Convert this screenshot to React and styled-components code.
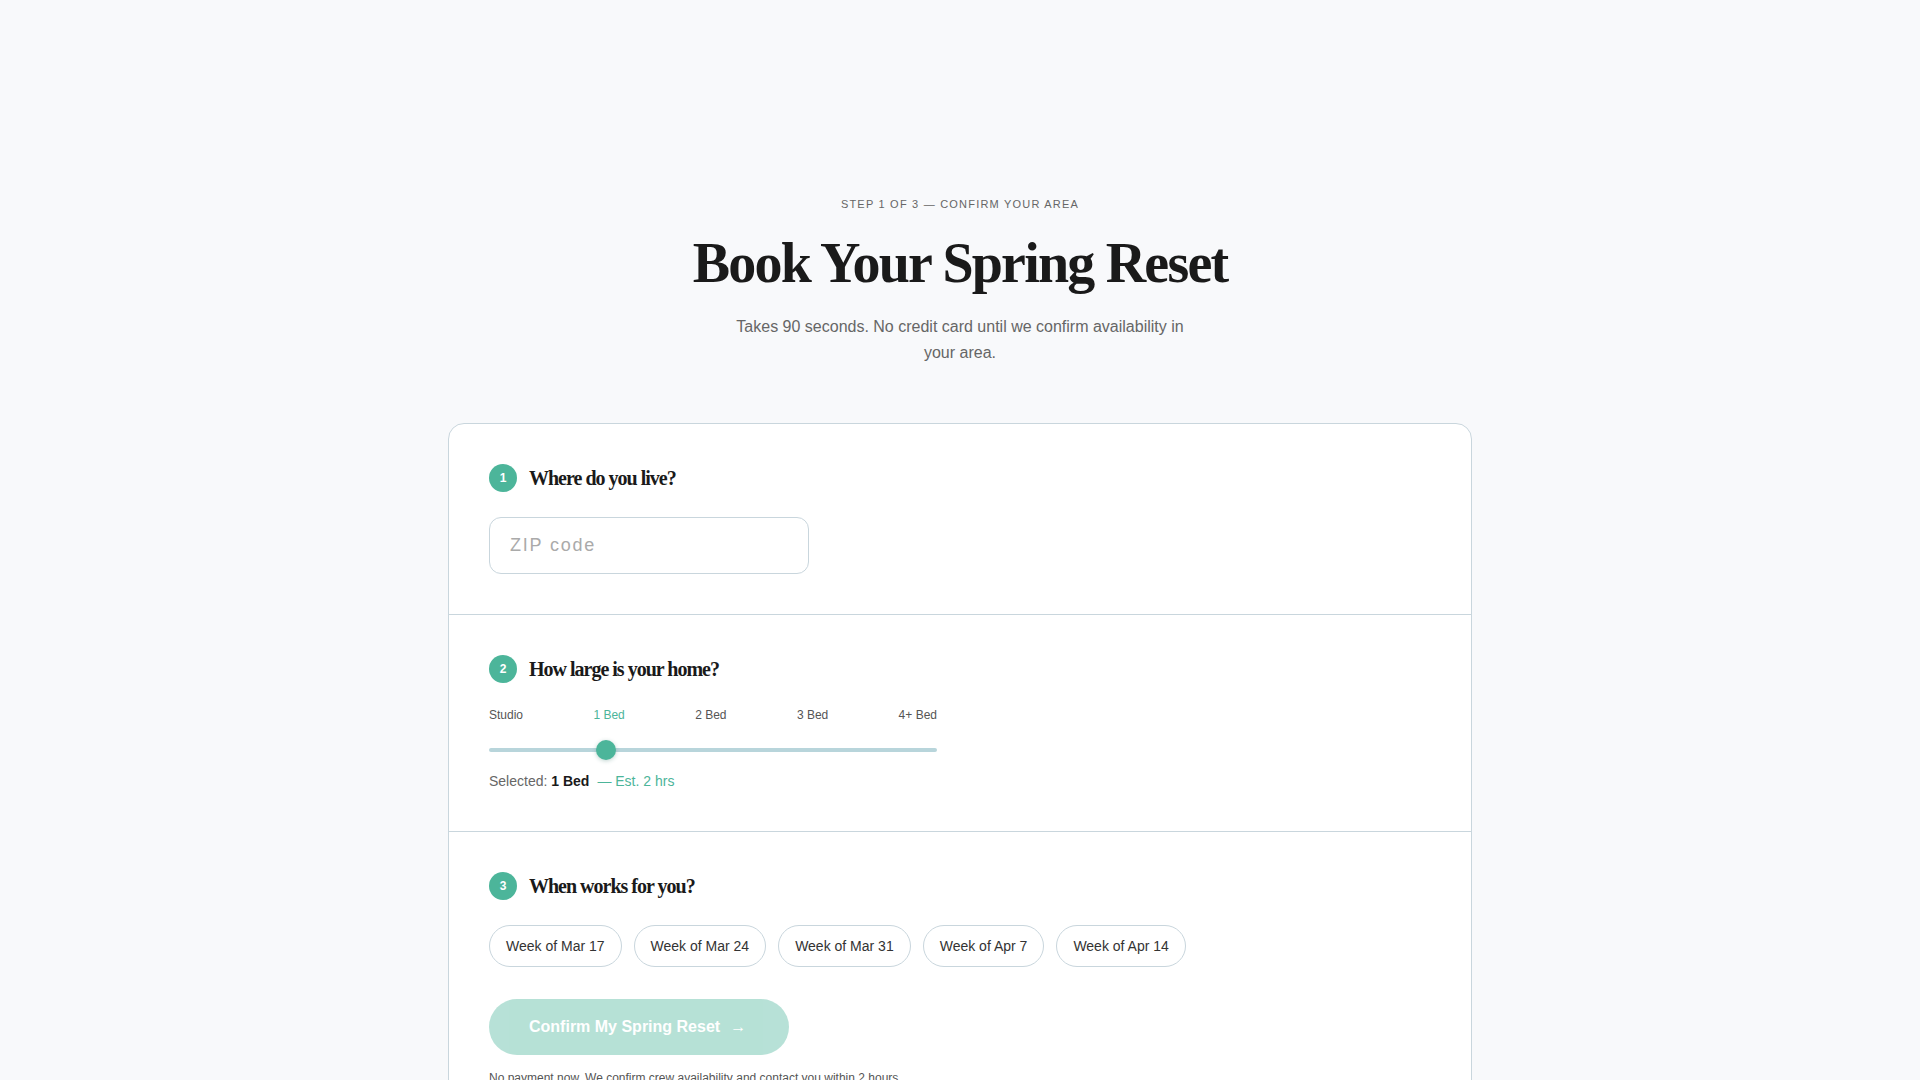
import React, { useState } from 'react'
import styled, { createGlobalStyle } from 'styled-components'

const TEAL = '#4cb59a'
const LINE = '#c9d6dd'

const GlobalStyle = createGlobalStyle`
  * {
    box-sizing: border-box;
  }
  body {
    margin: 0;
    background: #f8f9fb;
    font-family: 'Liberation Sans', Arial, sans-serif;
    color: #1a1a1a;
  }
`

//#region styled components
const Page = styled('main')`
  display: flex;
  flex-direction: column;
  align-items: center;
  padding: 198px 24px 80px;
`
const Eyebrow = styled('div')`
  font-size: 11px;
  letter-spacing: 0.11em;
  text-transform: uppercase;
  color: #666;
  margin-bottom: 23px;
`
const Title = styled('h1')`
  margin: 0 0 19px;
  font-family: 'Liberation Serif', 'Times New Roman', serif;
  font-weight: 700;
  font-size: 56px;
  line-height: 1.1;
  letter-spacing: -0.032em;
  color: #1a1a1a;
`
const Subtitle = styled('p')`
  margin: 0 0 57px;
  max-width: 480px;
  text-align: center;
  font-size: 16px;
  line-height: 1.65;
  color: #666;
`
const Card = styled('section')`
  width: 1024px;
  background: #fff;
  border: 1px solid ${LINE};
  border-radius: 16px;
`
const Step = styled('div')`
  padding: 40px;
  & + & {
    border-top: 1px solid ${LINE};
  }
`
const StepHeader = styled('div')`
  display: flex;
  align-items: center;
  gap: 12px;
  margin-bottom: 25px;
`
const Badge = styled('span')`
  width: 28px;
  height: 28px;
  border-radius: 50%;
  background: ${TEAL};
  color: #fff;
  font-size: 12px;
  font-weight: 700;
  display: flex;
  align-items: center;
  justify-content: center;
`
const StepTitle = styled('h2')`
  margin: 0;
  font-family: 'Liberation Serif', 'Times New Roman', serif;
  font-weight: 700;
  font-size: 20px;
  line-height: 28px;
  letter-spacing: -0.05em;
  color: #1a1a1a;
`
const ZipInput = styled('input')`
  width: 320px;
  height: 57px;
  padding: 0 20px;
  border: 1px solid ${LINE};
  border-radius: 12px;
  font-family: inherit;
  font-size: 18px;
  letter-spacing: 0.1em;
  color: #1a1a1a;
  outline: none;
  &::placeholder {
    color: #aaa;
  }
`
const SliderBox = styled('div')`
  width: 448px;
`
const SizeLabels = styled('div')`
  display: flex;
  justify-content: space-between;
  font-size: 12px;
  line-height: 14px;
`
const SizeLabel = styled('span')`
  color: ${p => (p.active ? TEAL : '#555')};
`
const Range = styled('input')`
  display: block;
  width: 100%;
  height: 20px;
  margin: 18px 0 0;
  background: transparent;
  -webkit-appearance: none;
  appearance: none;
  &::-webkit-slider-runnable-track {
    height: 4px;
    border-radius: 2px;
    background: #b8d5db;
  }
  &::-webkit-slider-thumb {
    -webkit-appearance: none;
    width: 20px;
    height: 20px;
    margin-top: -8px;
    border-radius: 50%;
    background: ${TEAL};
    box-shadow: 0 1px 4px rgba(40, 110, 95, 0.3);
    cursor: pointer;
  }
`
const Selected = styled('div')`
  margin-top: 11px;
  font-size: 14px;
  line-height: 20px;
  color: #666;
  b {
    color: #1a1a1a;
  }
`
const Estimate = styled('span')`
  margin-left: 8px;
  color: ${TEAL};
`
const Weeks = styled('div')`
  display: flex;
  flex-wrap: wrap;
  gap: 12px;
`
const WeekChip = styled('button')`
  height: 42px;
  padding: 0 16px;
  border: 1px solid ${p => (p.active ? TEAL : LINE)};
  border-radius: 999px;
  background: ${p => (p.active ? '#eaf7f3' : '#fff')};
  font-family: inherit;
  font-size: 14px;
  color: #333;
  cursor: pointer;
`
const ConfirmButton = styled('button')`
  margin-top: 32px;
  height: 56px;
  padding: 0 43px 0 40px;
  border: none;
  border-radius: 999px;
  background: ${TEAL};
  opacity: ${p => (p.disabled ? 0.4 : 1)};
  font-family: inherit;
  font-size: 16px;
  font-weight: 700;
  color: #fff;
`
const Arrow = styled('span')`
  margin-left: 10px;
`
const Footnote = styled('p')`
  margin: 16px 0 0;
  font-size: 12px;
  color: #555;
`
//#endregion

const sizes = ['Studio', '1 Bed', '2 Bed', '3 Bed', '4+ Bed']
const hours = ['1.5 hrs', '2 hrs', '3 hrs', '4 hrs', '5+ hrs']
const weeks = ['Week of Mar 17', 'Week of Mar 24', 'Week of Mar 31', 'Week of Apr 7', 'Week of Apr 14']

const App = () => {
  const [zip, setZip] = useState('')
  const [size, setSize] = useState(1)
  const [week, setWeek] = useState(null)

  const ready = zip.length === 5 && week !== null

  return (
    <>
      <GlobalStyle />
      <Page>
        <Eyebrow>Step 1 of 3 — Confirm your area</Eyebrow>
        <Title>Book Your Spring Reset</Title>
        <Subtitle>Takes 90 seconds. No credit card until we confirm availability in your area.</Subtitle>
        <Card>
          <Step>
            <StepHeader>
              <Badge>1</Badge>
              <StepTitle>Where do you live?</StepTitle>
            </StepHeader>
            <ZipInput
              placeholder="ZIP code"
              value={zip}
              maxLength={5}
              onChange={e => setZip(e.target.value.replace(/\D/g, ''))}
            />
          </Step>
          <Step>
            <StepHeader>
              <Badge>2</Badge>
              <StepTitle>How large is your home?</StepTitle>
            </StepHeader>
            <SliderBox>
              <SizeLabels>
                {sizes.map((s, i) => (
                  <SizeLabel key={s} active={i === size}>
                    {s}
                  </SizeLabel>
                ))}
              </SizeLabels>
              <Range type="range" min={0} max={4} step={1} value={size} onChange={e => setSize(Number(e.target.value))} />
            </SliderBox>
            <Selected>
              Selected: <b>{sizes[size]}</b>
              <Estimate>— Est. {hours[size]}</Estimate>
            </Selected>
          </Step>
          <Step>
            <StepHeader>
              <Badge>3</Badge>
              <StepTitle>When works for you?</StepTitle>
            </StepHeader>
            <Weeks>
              {weeks.map((w, i) => (
                <WeekChip key={w} active={i === week} onClick={() => setWeek(i)}>
                  {w}
                </WeekChip>
              ))}
            </Weeks>
            <ConfirmButton disabled={!ready}>
              Confirm My Spring Reset<Arrow>→</Arrow>
            </ConfirmButton>
            <Footnote>No payment now. We confirm crew availability and contact you within 2 hours.</Footnote>
          </Step>
        </Card>
      </Page>
    </>
  )
}

export default App
